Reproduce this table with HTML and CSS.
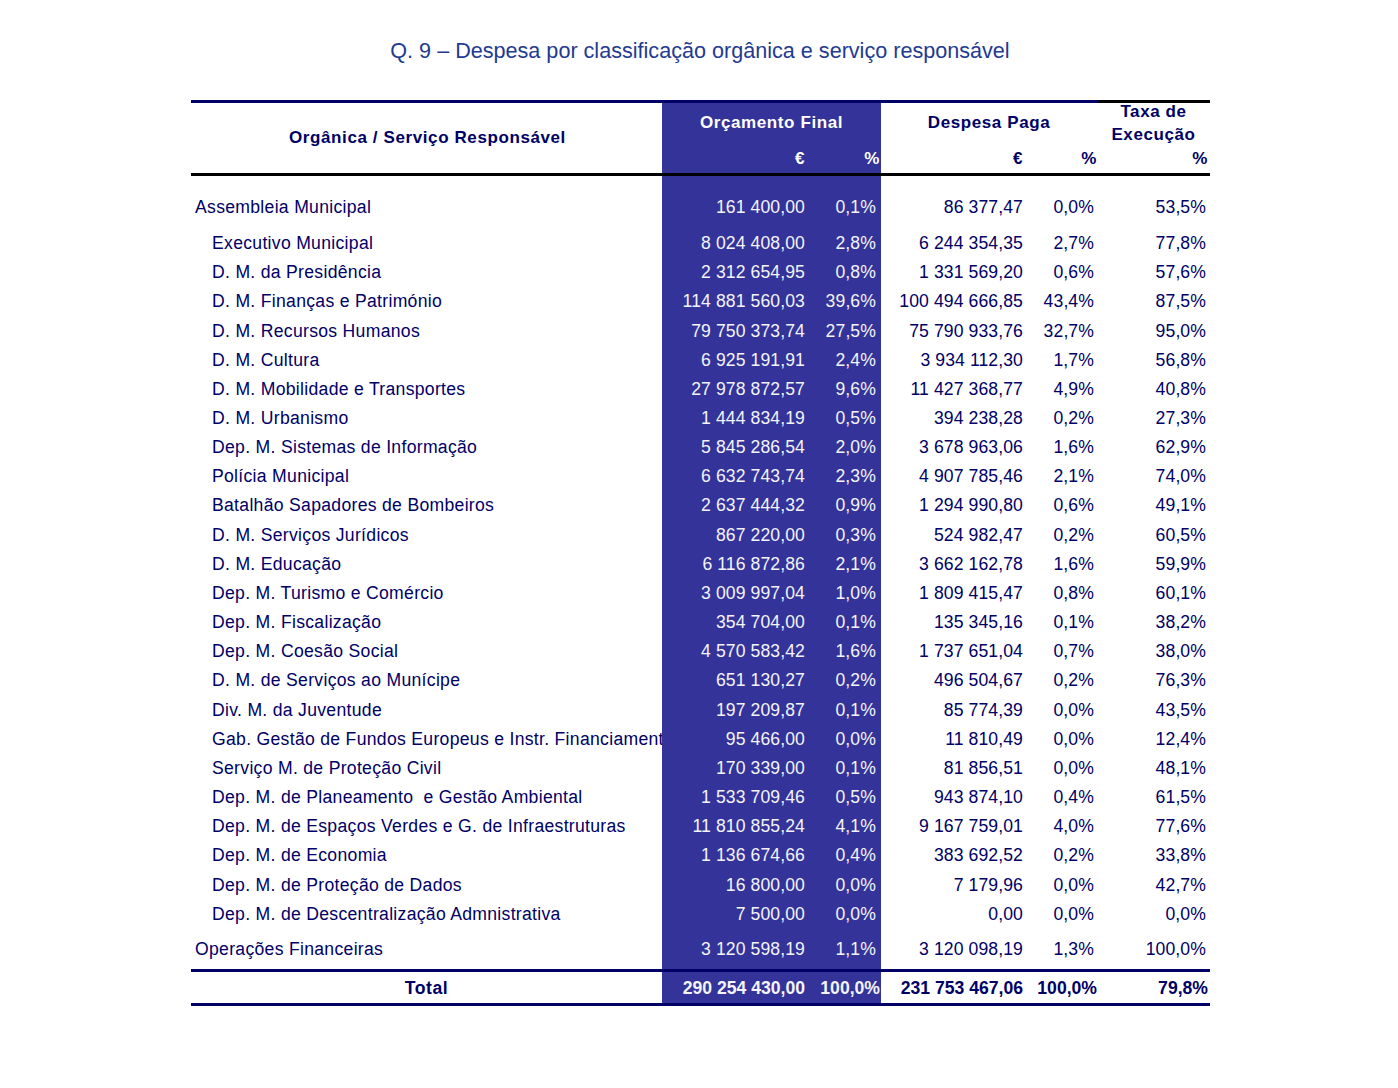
FILE: index.html
```html
<!DOCTYPE html>
<html lang="pt">
<head>
<meta charset="utf-8">
<title>Q. 9 – Despesa por classificação orgânica e serviço responsável</title>
<link rel="stylesheet" href="styles.css">
</head>
<body>
<div class="page">
  <h1 class="title">Q. 9 – Despesa por classificação orgânica e serviço responsável</h1>
  <div class="table">
    <div class="rule-top"><span class="seg navy-seg"></span><span class="seg black-seg"></span></div>
    <div class="head">
      <div class="h-label">Orgânica / Serviço Responsável</div>
      <div class="h-orc">Orçamento Final</div>
      <div class="h-orc-eur blue">€</div>
      <div class="h-orc-pct blue">%</div>
      <div class="h-desp">Despesa Paga</div>
      <div class="h-desp-eur">€</div>
      <div class="h-desp-pct">%</div>
      <div class="h-taxa">Taxa de<br>Execução</div>
      <div class="h-taxa-pct">%</div>
    </div>
    <div class="rule black"></div>
    <div class="body">
      <div class="row group first">
        <div class="c-label">Assembleia Municipal</div><div class="c-oe">161 400,00</div><div class="c-op">0,1%</div><div class="c-de">86 377,47</div><div class="c-dp">0,0%</div><div class="c-tx">53,5%</div>
      </div>
      <div class="row"><div class="c-label sub">Executivo Municipal</div><div class="c-oe">8 024 408,00</div><div class="c-op">2,8%</div><div class="c-de">6 244 354,35</div><div class="c-dp">2,7%</div><div class="c-tx">77,8%</div></div>
      <div class="row"><div class="c-label sub">D. M. da Presidência</div><div class="c-oe">2 312 654,95</div><div class="c-op">0,8%</div><div class="c-de">1 331 569,20</div><div class="c-dp">0,6%</div><div class="c-tx">57,6%</div></div>
      <div class="row"><div class="c-label sub">D. M. Finanças e Património</div><div class="c-oe">114 881 560,03</div><div class="c-op">39,6%</div><div class="c-de">100 494 666,85</div><div class="c-dp">43,4%</div><div class="c-tx">87,5%</div></div>
      <div class="row"><div class="c-label sub">D. M. Recursos Humanos</div><div class="c-oe">79 750 373,74</div><div class="c-op">27,5%</div><div class="c-de">75 790 933,76</div><div class="c-dp">32,7%</div><div class="c-tx">95,0%</div></div>
      <div class="row"><div class="c-label sub">D. M. Cultura</div><div class="c-oe">6 925 191,91</div><div class="c-op">2,4%</div><div class="c-de">3 934 112,30</div><div class="c-dp">1,7%</div><div class="c-tx">56,8%</div></div>
      <div class="row"><div class="c-label sub">D. M. Mobilidade e Transportes</div><div class="c-oe">27 978 872,57</div><div class="c-op">9,6%</div><div class="c-de">11 427 368,77</div><div class="c-dp">4,9%</div><div class="c-tx">40,8%</div></div>
      <div class="row"><div class="c-label sub">D. M. Urbanismo</div><div class="c-oe">1 444 834,19</div><div class="c-op">0,5%</div><div class="c-de">394 238,28</div><div class="c-dp">0,2%</div><div class="c-tx">27,3%</div></div>
      <div class="row"><div class="c-label sub">Dep. M. Sistemas de Informação</div><div class="c-oe">5 845 286,54</div><div class="c-op">2,0%</div><div class="c-de">3 678 963,06</div><div class="c-dp">1,6%</div><div class="c-tx">62,9%</div></div>
      <div class="row"><div class="c-label sub">Polícia Municipal</div><div class="c-oe">6 632 743,74</div><div class="c-op">2,3%</div><div class="c-de">4 907 785,46</div><div class="c-dp">2,1%</div><div class="c-tx">74,0%</div></div>
      <div class="row"><div class="c-label sub">Batalhão Sapadores de Bombeiros</div><div class="c-oe">2 637 444,32</div><div class="c-op">0,9%</div><div class="c-de">1 294 990,80</div><div class="c-dp">0,6%</div><div class="c-tx">49,1%</div></div>
      <div class="row"><div class="c-label sub">D. M. Serviços Jurídicos</div><div class="c-oe">867 220,00</div><div class="c-op">0,3%</div><div class="c-de">524 982,47</div><div class="c-dp">0,2%</div><div class="c-tx">60,5%</div></div>
      <div class="row"><div class="c-label sub">D. M. Educação</div><div class="c-oe">6 116 872,86</div><div class="c-op">2,1%</div><div class="c-de">3 662 162,78</div><div class="c-dp">1,6%</div><div class="c-tx">59,9%</div></div>
      <div class="row"><div class="c-label sub">Dep. M. Turismo e Comércio</div><div class="c-oe">3 009 997,04</div><div class="c-op">1,0%</div><div class="c-de">1 809 415,47</div><div class="c-dp">0,8%</div><div class="c-tx">60,1%</div></div>
      <div class="row"><div class="c-label sub">Dep. M. Fiscalização</div><div class="c-oe">354 704,00</div><div class="c-op">0,1%</div><div class="c-de">135 345,16</div><div class="c-dp">0,1%</div><div class="c-tx">38,2%</div></div>
      <div class="row"><div class="c-label sub">Dep. M. Coesão Social</div><div class="c-oe">4 570 583,42</div><div class="c-op">1,6%</div><div class="c-de">1 737 651,04</div><div class="c-dp">0,7%</div><div class="c-tx">38,0%</div></div>
      <div class="row"><div class="c-label sub">D. M. de Serviços ao Munícipe</div><div class="c-oe">651 130,27</div><div class="c-op">0,2%</div><div class="c-de">496 504,67</div><div class="c-dp">0,2%</div><div class="c-tx">76,3%</div></div>
      <div class="row"><div class="c-label sub">Div. M. da Juventude</div><div class="c-oe">197 209,87</div><div class="c-op">0,1%</div><div class="c-de">85 774,39</div><div class="c-dp">0,0%</div><div class="c-tx">43,5%</div></div>
      <div class="row"><div class="c-label sub">Gab. Gestão de Fundos Europeus e Instr. Financiamento</div><div class="c-oe">95 466,00</div><div class="c-op">0,0%</div><div class="c-de">11 810,49</div><div class="c-dp">0,0%</div><div class="c-tx">12,4%</div></div>
      <div class="row"><div class="c-label sub">Serviço M. de Proteção Civil</div><div class="c-oe">170 339,00</div><div class="c-op">0,1%</div><div class="c-de">81 856,51</div><div class="c-dp">0,0%</div><div class="c-tx">48,1%</div></div>
      <div class="row"><div class="c-label sub">Dep. M. de Planeamento &nbsp;e Gestão Ambiental</div><div class="c-oe">1 533 709,46</div><div class="c-op">0,5%</div><div class="c-de">943 874,10</div><div class="c-dp">0,4%</div><div class="c-tx">61,5%</div></div>
      <div class="row"><div class="c-label sub">Dep. M. de Espaços Verdes e G. de Infraestruturas</div><div class="c-oe">11 810 855,24</div><div class="c-op">4,1%</div><div class="c-de">9 167 759,01</div><div class="c-dp">4,0%</div><div class="c-tx">77,6%</div></div>
      <div class="row"><div class="c-label sub">Dep. M. de Economia</div><div class="c-oe">1 136 674,66</div><div class="c-op">0,4%</div><div class="c-de">383 692,52</div><div class="c-dp">0,2%</div><div class="c-tx">33,8%</div></div>
      <div class="row"><div class="c-label sub">Dep. M. de Proteção de Dados</div><div class="c-oe">16 800,00</div><div class="c-op">0,0%</div><div class="c-de">7 179,96</div><div class="c-dp">0,0%</div><div class="c-tx">42,7%</div></div>
      <div class="row"><div class="c-label sub">Dep. M. de Descentralização Admnistrativa</div><div class="c-oe">7 500,00</div><div class="c-op">0,0%</div><div class="c-de">0,00</div><div class="c-dp">0,0%</div><div class="c-tx">0,0%</div></div>
      <div class="row group last">
        <div class="c-label">Operações Financeiras</div><div class="c-oe">3 120 598,19</div><div class="c-op">1,1%</div><div class="c-de">3 120 098,19</div><div class="c-dp">1,3%</div><div class="c-tx">100,0%</div>
      </div>
    </div>
    <div class="rule navy"></div>
    <div class="row total">
      <div class="c-label total-label">Total</div><div class="c-oe">290 254 430,00</div><div class="c-op">100,0%</div><div class="c-de">231 753 467,06</div><div class="c-dp">100,0%</div><div class="c-tx">79,8%</div>
    </div>
    <div class="rule navy"></div>
  </div>
</div>
</body>
</html>
```

FILE: styles.css
```css
html, body {
  margin: 0;
  padding: 0;
  background: #ffffff;
}

body {
  font-family: "Liberation Sans", Arial, sans-serif;
  color: #000066;
}

.page {
  width: 1398px;
  padding-top: 38px;
}

.title {
  margin: 0 0 37px 0;
  text-align: center;
  font-weight: normal;
  font-size: 21.6px;
  line-height: 25px;
  color: #233a91;
  padding-left: 2px;
}

.table {
  width: 1019px;
  margin-left: 191px;
}

.rule-top {
  display: flex;
  height: 3px;
}
.seg { display: block; height: 3px; }
.navy-seg { width: 906px; background: #000066; }
.black-seg { flex: 1; background: #000000; }

.rule { height: 3px; }
.rule.black { background: #000000; }
.rule.navy { background: #000066; }

.head,
.row {
  display: grid;
  grid-template-columns: 471px 153px 66px 154px 70px 105px;
}

.head {
  grid-template-rows: 40px 30px;
  font-weight: bold;
  font-size: 17px;
  letter-spacing: 0.6px;
  color: #000066;
}

.head > div {
  display: flex;
  align-items: center;
}

.h-label {
  grid-column: 1;
  grid-row: 1 / span 2;
  justify-content: center;
  padding-left: 2px;
}

.h-orc {
  grid-column: 2 / span 2;
  grid-row: 1;
  justify-content: center;
  background: #333399;
  color: #ffffff;
}

.blue {
  background: #333399;
  color: #ffffff;
}

.h-orc-eur { grid-column: 2; grid-row: 2; justify-content: flex-end; padding-right: 10px; padding-top: 2px; }
.h-orc-pct { grid-column: 3; grid-row: 2; justify-content: flex-end; padding-right: 1px; padding-top: 2px; }

.h-desp {
  grid-column: 4 / span 2;
  grid-row: 1;
  justify-content: center;
  padding-right: 8px;
}
.h-desp-eur { grid-column: 4; grid-row: 2; justify-content: flex-end; padding-right: 12px; padding-top: 2px; }
.h-desp-pct { grid-column: 5; grid-row: 2; justify-content: flex-end; padding-right: 8px; padding-top: 2px; }

.h-taxa {
  grid-column: 6;
  grid-row: 1;
  text-align: center;
  justify-content: center;
  line-height: 23px;
  margin-top: -1px;
  padding-right: 8px;
}
.h-taxa-pct { grid-column: 6; grid-row: 2; justify-content: flex-end; padding-right: 2px; padding-top: 2px; }

.row {
  height: 29.17px;
  font-size: 17.6px;
  letter-spacing: 0.1px;
}

.row > div {
  display: flex;
  align-items: center;
  justify-content: flex-end;
  white-space: nowrap;
  overflow: hidden;
}

.row.first { height: 53px; }
.row.first > div { padding-top: 16.4px; padding-bottom: 6.4px; }
.row.last { height: 40.4px; }
.row.last > div { padding-top: 5.8px; padding-bottom: 5.4px; }

.c-label {
  justify-content: flex-start !important;
  padding-left: 4px;
  letter-spacing: 0.3px;
}
.c-label.sub { padding-left: 21px; }

.c-oe {
  background: #333399;
  color: #f4f4fa;
  padding-right: 10px;
}
.c-op {
  background: #333399;
  color: #f4f4fa;
  padding-right: 5px;
}
.c-de { padding-right: 12px; }
.c-dp { padding-right: 11px; }
.c-tx { padding-right: 4px; }

.row.total {
  height: 31px;
  font-weight: bold;
  letter-spacing: 0;
}
.row.total > div { padding-top: 2px; }
.row.total .c-op { padding-right: 1px; }
.row.total .c-dp { padding-right: 8px; }
.row.total .c-tx { padding-right: 2px; }

.total-label {
  justify-content: center !important;
  padding-left: 0;
  letter-spacing: 0.6px;
}
```
